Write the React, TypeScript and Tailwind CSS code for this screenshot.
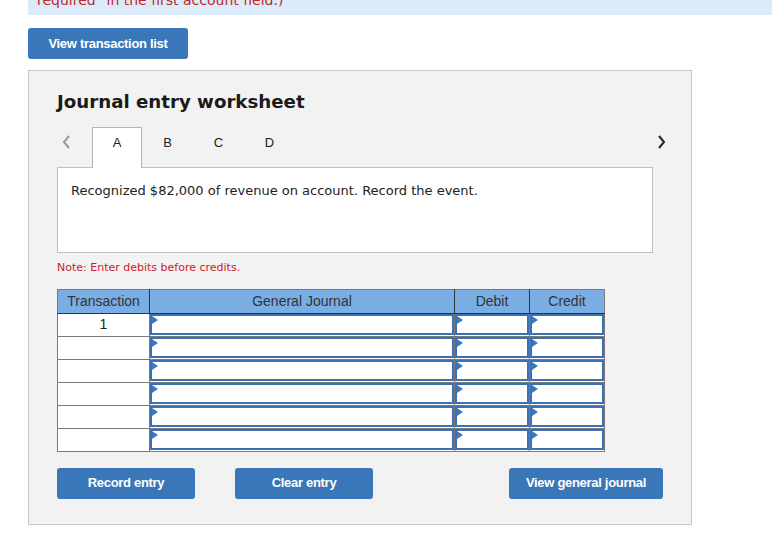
import React from "react";

const btn =
  "h-[31px] rounded-[3px] bg-[#3a77b9] text-white text-[13px] font-bold tracking-[-0.3px] [font-family:'Liberation_Sans_Narrow','Arial_Narrow','Liberation_Sans',sans-serif]";

const Marker = () => (
  <svg className="absolute left-0 top-0" width="6" height="8" viewBox="0 0 6 8">
    <path d="M0 0 L6 4 L0 8 Z" fill="#3b78c0" />
  </svg>
);

const InputCell = ({ w }: { w: string }) => (
  <td className={`${w} h-[23px] border border-[#7a7a7a] p-0 bg-white`}>
    <div className="relative h-[21px] border-2 border-[#3c70b3] bg-white">
      <Marker />
    </div>
  </td>
);

export default function App() {
  const rows = ["1", "", "", "", "", ""];
  return (
    <div className="w-[772px] h-[541px] bg-white overflow-hidden [font-family:'DejaVu_Sans',Verdana,sans-serif]">
      <div className="ml-[28px] h-[15px] bg-[#dcebf9] overflow-hidden">
        <p className="-mt-[10px] pl-[9px] text-[14px] text-[#c0282a]">
          required" in the first account field.)
        </p>
      </div>

      <button className={`${btn} ml-[28px] mt-[13px] w-[160px]`}>View transaction list</button>

      <div className="ml-[28px] mt-[11px] w-[664px] h-[455px] border border-[#c8c8c8] bg-[#f2f2f2] pl-[28px] pt-[20px]">
        <h2 className="text-[18.2px] font-bold text-[#1a1a1a] leading-[22px]">Journal entry worksheet</h2>

        <div className="mt-[14px] flex items-start h-[40px] w-[610px]">
          <span className="w-[35px] pl-[4px] pt-[7px]">
            <svg width="10" height="16" viewBox="0 0 10 16">
              <path d="M8 2 L3 8 L8 14" fill="none" stroke="#9a9a9a" strokeWidth="2" />
            </svg>
          </span>
          <div className="relative z-10 w-[50px] h-[41px] bg-white border border-b-0 border-[#b5b5b5] flex justify-center pt-[5px] text-[13px] text-[#222] [font-family:'Liberation_Sans',Arial,sans-serif]">
            A
          </div>
          {["B", "C", "D"].map((t) => (
            <div key={t} className="w-[51px] h-[40px] flex justify-center pt-[6px] text-[13px] text-[#222] [font-family:'Liberation_Sans',Arial,sans-serif]">
              {t}
            </div>
          ))}
          <span className="ml-auto pt-[7px]">
            <svg width="10" height="16" viewBox="0 0 10 16">
              <path d="M2 2 L7 8 L2 14" fill="none" stroke="#222" strokeWidth="2" />
            </svg>
          </span>
        </div>

        <div className="w-[596px] h-[86px] bg-white border border-[#c0c0c0] pl-[13px] pt-[13px] text-[13px] text-[#222]">
          Recognized $82,000 of revenue on account. Record the event.
        </div>

        <p className="mt-[7px] text-[11px] text-[#c8242b]">Note: Enter debits before credits.</p>

        <table className="mt-[12px] border-collapse border border-[#7a7a7a] [font-family:'Liberation_Sans',Arial,sans-serif] text-[14px]">
          <thead>
            <tr className="h-[24px] bg-[#79ade3] text-[#333]">
              <th className="w-[92px] font-normal border border-[#7a7a7a] border-b-[#333] border-r-[#333]">Transaction</th>
              <th className="w-[305px] font-normal border border-[#7a7a7a] border-b-[#333] border-r-[#333]">General Journal</th>
              <th className="w-[75px] font-normal border border-[#7a7a7a] border-b-[#333] border-r-[#333]">Debit</th>
              <th className="w-[75px] font-normal border border-[#7a7a7a] border-b-[#333]">Credit</th>
            </tr>
          </thead>
          <tbody>
            {rows.map((r, i) => (
              <tr key={i} className="h-[23px]">
                <td className="w-[92px] border border-[#7a7a7a] bg-white text-center text-[#222] align-middle p-0">{r}</td>
                <InputCell w="w-[305px]" />
                <InputCell w="w-[75px]" />
                <InputCell w="w-[75px]" />
              </tr>
            ))}
          </tbody>
        </table>

        <div className="mt-[16px] flex">
          <button className={`${btn} w-[138px]`}>Record entry</button>
          <button className={`${btn} w-[138px] ml-[40px]`}>Clear entry</button>
          <button className={`${btn} w-[154px] ml-[136px]`}>View general journal</button>
        </div>
      </div>
    </div>
  );
}
